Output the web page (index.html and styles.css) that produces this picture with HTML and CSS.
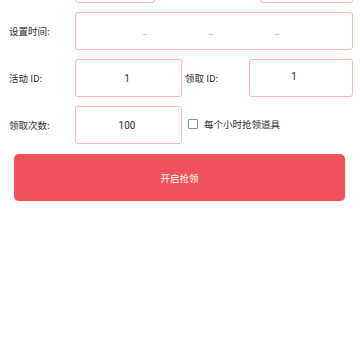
FILE: index.html
```html
<!DOCTYPE html>
<html lang="zh">
<head>
<meta charset="UTF-8">
<meta name="viewport" content="width=device-width, initial-scale=1.0">
<title>抢领设置</title>
<link rel="stylesheet" href="styles.css">
</head>
<body>
<div class="form">
  <div class="row">
    <span class="label"></span>
    <div class="field field-small"></div>
    <span class="gap-top"></span>
    <div class="field field-grow"></div>
  </div>

  <div class="row">
    <span class="label">设置时间:</span>
    <div class="field field-grow time-field">
      <span class="time-part">--</span>
      <span class="time-part">--</span>
      <span class="time-part">--</span>
    </div>
  </div>

  <div class="row">
    <span class="label">活动 ID:</span>
    <div class="field field-mid">1</div>
    <span class="label label-second">领取 ID:</span>
    <div class="field field-grow field-offset">1</div>
  </div>

  <div class="row">
    <span class="label">领取次数:</span>
    <div class="field field-mid">100</div>
    <label class="check">
      <span class="check-box"></span>
      <span class="check-text">每个小时抢领道具</span>
    </label>
  </div>

  <button class="start-btn">开启抢领</button>
</div>
</body>
</html>
```

FILE: styles.css
```css
body {
  margin: 0;
  background-color: #fff;
  font-family: "Noto Sans CJK SC", "Noto Sans", sans-serif;
  color: #2b2b2b;
  overflow: hidden;
}
.form {
  margin-top: -35px;
  padding: 0 7px 0 9px;
}
.row {
  display: flex;
  align-items: center;
  height: 38px;
  margin-bottom: 9px;
}
.label {
  width: 66px;
  flex-shrink: 0;
  font-size: 9.5px;
  white-space: nowrap;
}
.label-second {
  width: 64px;
  margin-left: 3px;
}
.field {
  box-sizing: border-box;
  height: 38px;
  border: 1px solid #ffb4b4;
  border-radius: 3px;
  display: flex;
  align-items: center;
  justify-content: center;
  font-family: Roboto, "Noto Sans", sans-serif;
  font-size: 10px;
  color: #2b2b2b;
}
.field-small {
  width: 80px;
}
.gap-top {
  width: 105px;
}
.field-mid {
  width: 107px;
  padding-right: 3px;
}
.field-grow {
  flex: 1;
}
.field-offset {
  padding: 0 14px 3px 0;
}
.time-field {
  padding-right: 6px;
}
.time-part {
  width: 66px;
  text-align: center;
  font-size: 7px;
  color: #888;
  padding-top: 7px;
}
.check {
  display: flex;
  align-items: center;
  margin-left: 6px;
  margin-top: -3px;
}
.check-box {
  box-sizing: border-box;
  width: 10px;
  height: 10px;
  border: 1px solid #8a8a8a;
  border-radius: 1px;
}
.check-text {
  margin-left: 6px;
  font-size: 9.5px;
}
.start-btn {
  display: block;
  box-sizing: border-box;
  width: calc(100% - 13px);
  height: 47px;
  margin: 10px 8px 0 5px;
  border: none;
  border-radius: 5px;
  background-color: #ef5258;
  box-shadow: 0 1px 2px rgba(0,0,0,0.2);
  color: #fff;
  font-family: "Noto Sans CJK SC", "Noto Sans", sans-serif;
  font-size: 9.5px;
}
```
